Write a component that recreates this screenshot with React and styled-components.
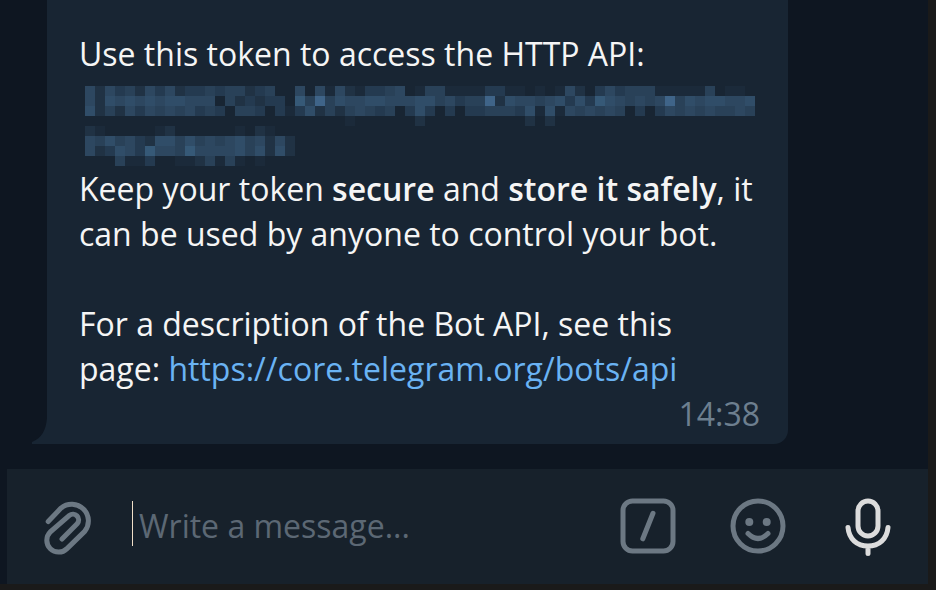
import React from "react";
import styled, { createGlobalStyle } from "styled-components";

const GlobalStyle = createGlobalStyle`
  * { box-sizing: border-box; }
  body { margin: 0; background: #1a1a1a; overflow: hidden; }
`;

const Window = styled.div`
  width: 936px;
  height: 590px;
  display: flex;
  flex-direction: column;
  background: #1a1a1a;
  padding: 0 8px 6px 0;
  font-family: "Open Sans", "Noto Sans", sans-serif;
  font-size: 32px;
  line-height: 45px;
`;

const History = styled.main`
  height: 469px;
  display: flex;
  align-items: flex-start;
  padding-left: 31px;
  background: #0e1621;
`;

const Tail = styled.svg`
  display: block;
  width: 16px;
  height: 26px;
  align-self: flex-end;
  margin-bottom: 25px;
  fill: #182533;
`;

const Bubble = styled.article`
  width: 741px;
  height: 444px;
  padding: 31px 28px 8px 32px;
  display: flex;
  flex-direction: column;
  background: #182533;
  color: #f5f5f5;
  border-bottom-right-radius: 14px;
`;

const Line = styled.p`
  height: 45px;
  margin: 0;
  white-space: pre;
`;

const Strong = styled.strong`
  font-weight: 600;
`;

const Link = styled.a`
  color: #6ab3f3;
  text-decoration: none;
`;

const Time = styled.time`
  align-self: flex-end;
  color: #6d7f8f;
`;

const TokenBox = styled.div`
  height: 90px;
  padding: 9.7px 0 0 6px;
`;

const Mosaic = styled.div`
  display: grid;
  grid-template-columns: repeat(67, 10px);
  grid-auto-rows: 10px;
`;

const Cell = styled.span`
  background: ${({ $tone }) => $tone};
`;

const Composer = styled.footer`
  height: 115px;
  margin-left: 7px;
  display: flex;
  align-items: center;
  background: #17212b;
  box-shadow: -7px 0 0 #0e1621;
`;

const Icon = styled.svg`
  display: block;
  flex: none;
  width: 60px;
  height: 60px;
  margin-left: ${({ $gap }) => $gap}px;
  fill: none;
  stroke: ${({ $color }) => $color || "#6c7883"};
  stroke-width: 5;
  stroke-linecap: round;
  stroke-linejoin: round;
`;

const Caret = styled.span`
  width: 1px;
  height: 45px;
  margin: -7px 0 0 34px;
  background: #f0dfc8;
`;

const Placeholder = styled.span`
  width: 478px;
  padding: 0 0 2px 6px;
  color: #5c6874;
`;

const tones = {
  ".": "transparent",
  a: "#1b2a3a",
  b: "#203244",
  c: "#243a50",
  d: "#294158",
  e: "#2d4760",
  f: "#304d68",
  g: "#365977",
  h: "#3f6488",
};

const mosaicRows = [
  "ebecdbecebccdcddbcd..e.eaebaccde.addaaaaccaa.a.aeb.cecdddaaaaad.aa.",
  "ebfefefeffeee.dbcbcc.gdhdfeeffeeeffdecddhbfeedefcfcgfededehdfeffeef",
  "fbdbecededecdc.ddc.cacfbdbdedcd.cfc.c.ccdddcfafaededed.c.cedededded",
  "..........................a......b..........b.b",
  "ba.....ab......a.ba",
  "edfdecbffdfdedefdebeb",
  "ebcfecgeedgeeeefdfbfb",
  "...daac..aabdada.a",
].map((row) => row.padEnd(67, ".").slice(0, 67));

function HiddenToken() {
  return (
    <TokenBox>
      <Mosaic>
        {mosaicRows.flatMap((row, y) =>
          [...row].map((level, x) => <Cell key={`${y}-${x}`} $tone={tones[level]} />)
        )}
      </Mosaic>
    </TokenBox>
  );
}

export default function App() {
  return (
    <>
      <GlobalStyle />
      <Window>
        <History>
          <Tail viewBox="0 0 16 26">
            <path d="M16 0C15 12 11 20 1 24v2h15Z" />
          </Tail>
          <Bubble>
            <Line>Use this token to access the HTTP API:</Line>
            <HiddenToken />
            <Line>
              Keep your token <Strong>secure</Strong> and <Strong>store it safely</Strong>, it
            </Line>
            <Line>can be used by anyone to control your bot.</Line>
            <Line />
            <Line>For a description of the Bot API, see this</Line>
            <Line>
              page: <Link>https://core.telegram.org/bots/api</Link>
            </Line>
            <Time>14:38</Time>
          </Bubble>
        </History>
        <Composer>
          <Icon $gap={31} viewBox="38 497 60 60">
            <path d="M48.200 521.500L61 508.100A16.700 16.700 0 0 1 84.700 531.400L67 548.600A11.800 11.800 0 0 1 50.200 532L69.400 515.400A5.700 5.700 0 0 1 77.400 523.400L62 539" />
          </Icon>
          <Caret />
          <Placeholder>Write a message...</Placeholder>
          <Icon $gap={7} viewBox="618 497 60 60">
            <rect x="623" y="501" width="50" height="50" rx="9.500" />
            <path d="M653 513.300L642.800 538.800" />
          </Icon>
          <Icon $gap={50} viewBox="728 497 60 60">
            <circle cx="758" cy="526" r="25" />
            <g fill="#6c7883" stroke="none">
              <circle cx="749.300" cy="522" r="4" />
              <circle cx="766.700" cy="522" r="4" />
            </g>
            <path d="M748 533.500Q758 543.500 768 533.500" />
          </Icon>
          <Icon $gap={50} $color="#dcdcdc" viewBox="838 497 60 60">
            <rect x="858" y="501" width="20" height="35" rx="10" />
            <path d="M848 527.500C849 539 857 546 868 546S887 539 888 527.500M868 546V553.500" />
          </Icon>
        </Composer>
      </Window>
    </>
  );
}
